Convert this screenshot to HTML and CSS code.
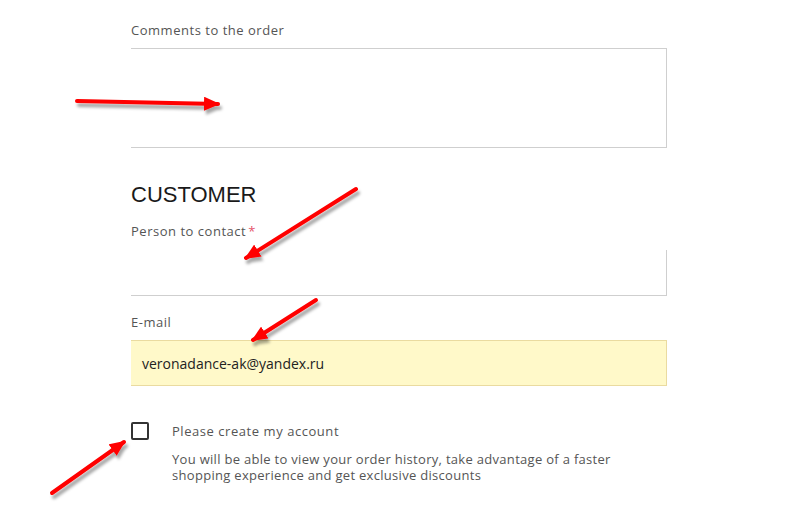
FILE: index.html
```html
<!DOCTYPE html>
<html>
<head>
<meta charset="utf-8">
<link rel="stylesheet" href="styles.css">
</head>
<body>
<div class="page">
  <form class="form">
    <div class="field">
      <label class="label">Comments to the order</label>
      <div class="textarea"></div>
    </div>
    <h2 class="heading">CUSTOMER</h2>
    <div class="field">
      <label class="label">Person to contact<span class="req">*</span></label>
      <div class="input input-plain"></div>
    </div>
    <div class="field field-email">
      <label class="label">E-mail</label>
      <div class="input input-filled">veronadance-ak@yandex.ru</div>
    </div>
    <div class="check-row">
      <span class="checkbox"></span>
      <div class="check-text">
        <div class="check-title">Please create my account</div>
        <div class="check-desc">You will be able to view your order history, take advantage of a faster shopping experience and get exclusive discounts</div>
      </div>
    </div>
  </form>
  <svg class="arrows" width="803" height="521" viewBox="0 0 803 521">
    <defs>
      <marker id="head" markerUnits="userSpaceOnUse" markerWidth="16" markerHeight="14" refX="14" refY="7" orient="auto">
        <path d="M0,0 L16,7 L0,14 Z" fill="#f00"/>
      </marker>
      <filter id="sh" x="-20%" y="-20%" width="140%" height="160%">
        <feDropShadow dx="2" dy="4" stdDeviation="1.6" flood-color="#000" flood-opacity="0.35"/>
      </filter>
    </defs>
    <g filter="url(#sh)" stroke="#f00" stroke-width="4" stroke-linecap="round" fill="none">
      <line x1="77" y1="101" x2="218" y2="104" marker-end="url(#head)"/>
      <line x1="356" y1="189" x2="246" y2="258" marker-end="url(#head)"/>
      <line x1="316" y1="300" x2="253" y2="340" marker-end="url(#head)"/>
      <line x1="52" y1="493" x2="124" y2="442" marker-end="url(#head)"/>
    </g>
  </svg>
</div>
</body>
</html>
```

FILE: styles.css
```css
* { box-sizing: border-box; }
html, body { margin: 0; padding: 0; background: #fff; }
body { font-family: "Open Sans", "DejaVu Sans", sans-serif; }
.page { position: relative; width: 803px; height: 521px; overflow: hidden; }
.form { margin-left: 131px; width: 536px; padding-top: 21px; display: flex; flex-direction: column; }
.label { display: block; font-size: 13px; line-height: 18px; color: #555; letter-spacing: 0.52px; }
.req { color: #e5536b; margin-left: 2px; }
.textarea { margin-top: 9px; height: 100px; border: 1px solid #cfcfcf; border-left: none; }
.heading { margin: 35px 0 0; font-family: "Liberation Sans", Arial, sans-serif; font-weight: 400; font-size: 22px; line-height: 24px; color: #1a1a1a; }
.heading + .field { margin-top: 15px; }
.input { height: 46px; margin-top: 10px; border: 1px solid #cfcfcf; border-left: none; border-top: none; }
.input-plain { margin-top: 10px; }
.field-email { margin-top: 17px; }
.field-email .input { margin-top: 9px; }
.input-filled { background: #fff9c9; border: 1px solid #eadba0; border-left: none; padding: 0 0 0 11px; display: flex; align-items: center; font-size: 14px; color: #222; }
.check-row { display: flex; margin-top: 35px; }
.checkbox { width: 18px; height: 18px; border: 2px solid #333; border-radius: 2px; flex: none; margin-top: 1px; }
.check-text { margin-left: 23px; font-size: 13px; color: #555; letter-spacing: 0.55px; }
.check-title { line-height: 20px; }
.check-desc { margin-top: 10px; line-height: 16px; width: 460px; letter-spacing: 0.3px; }
.arrows { position: absolute; left: 0; top: 0; pointer-events: none; }
```
